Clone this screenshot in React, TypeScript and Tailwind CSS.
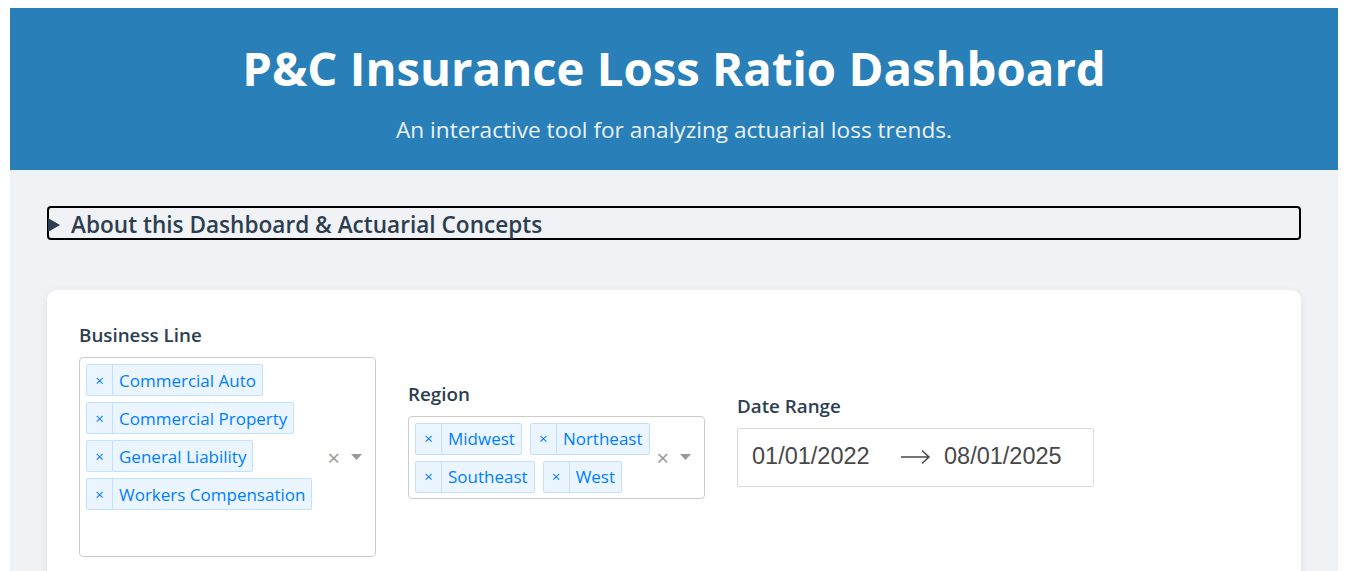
import React from "react";

const font = { fontFamily: '"Open Sans", "Noto Sans", sans-serif' };

function Tag({ label }: { label: string }) {
  return (
    <div className="flex h-[32px] items-stretch rounded-[2px] border border-[#c2e0ff] bg-[#ebf5ff] text-[#007eff]">
      <span className="flex w-[26px] items-center justify-center border-r border-[#c2e0ff] text-[15px] leading-none">×</span>
      <span className="flex items-center px-[6px] text-[17px] leading-none">{label}</span>
    </div>
  );
}

function Caret() {
  return (
    <svg width="11" height="6" viewBox="0 0 11 6" className="block">
      <path d="M0 0 L11 0 L5.5 6 Z" fill="#999" />
    </svg>
  );
}

function Multi({ tags, extra }: { tags: string[]; extra?: boolean }) {
  return (
    <div className="flex w-[297px] rounded-[4px] border border-[#ccc] bg-white">
      <div className="flex flex-1 flex-wrap content-start gap-x-[8px] gap-y-[6px] pb-[5px] pl-[6px] pt-[6px]">
        {tags.map((t) => (
          <Tag key={t} label={t} />
        ))}
        {extra && <div className="h-[35px] w-full" />}
      </div>
      <div className="flex items-center gap-[11px] pr-[13px]">
        <span className="text-[22px] leading-none text-[#999]">×</span>
        <Caret />
      </div>
    </div>
  );
}

export default function App() {
  return (
    <div className="min-h-screen bg-white pl-[10px] pt-[8px]" style={font}>
      <div className="w-[1328px]">
        <header className="flex h-[162px] flex-col items-center bg-[#2980b9] text-white">
          <h1 className="mt-[28px] text-[47.3px] font-bold leading-[64px]">P&amp;C Insurance Loss Ratio Dashboard</h1>
          <p className="mt-[14px] text-[22.6px] leading-[32px] text-[#eaf2f8]">An interactive tool for analyzing actuarial loss trends.</p>
        </header>
        <main className="bg-[#f0f2f5] px-[37px] pb-[40px] pt-[36px]">
          <details className="rounded-[4px] border-2 border-black">
            <summary className="flex h-[30px] cursor-pointer list-none items-center pt-[3px] text-[22.6px] font-semibold text-[#2c3e50]">
              <svg width="12" height="14" viewBox="0 0 12 14" className="ml-[-1px] mr-[11px]">
                <path d="M0 0 L12 7 L0 14 Z" fill="#2c3e50" />
              </svg>
              About this Dashboard &amp; Actuarial Concepts
            </summary>
          </details>
          <section className="mt-[50px] rounded-[10px] bg-white px-[32px] py-[32px] shadow-[0_2px_8px_rgba(0,0,0,0.08)]">
            <div className="flex items-center gap-[32px]">
              <div className="flex flex-col">
                <label className="mb-[8px] text-[18.8px] font-semibold leading-[27px] text-[#2c3e50]">Business Line</label>
                <Multi
                  tags={["Commercial Auto", "Commercial Property", "General Liability", "Workers Compensation"]}
                  extra
                />
              </div>
              <div className="flex flex-col">
                <label className="mb-[8px] text-[18.8px] font-semibold leading-[27px] text-[#2c3e50]">Region</label>
                <Multi tags={["Midwest", "Northeast", "Southeast", "West"]} />
              </div>
              <div className="flex flex-col">
                <label className="mb-[8px] text-[18.8px] font-semibold leading-[27px] text-[#2c3e50]">Date Range</label>
                <div
                  className="flex h-[59px] w-[357px] items-center rounded-[2px] border border-[#dbdbdb] bg-white pl-[14px] text-[23.5px] text-[#484848]"
                  style={{ fontFamily: '"Liberation Sans", Arial, sans-serif' }}
                >
                  <span className="w-[130px]">01/01/2022</span>
                  <svg width="30" height="16" viewBox="0 0 30 16" className="ml-[19px] mr-[13px]">
                    <path d="M0 8 H28 M21 1.5 L28 8 L21 14.5" stroke="#484848" strokeWidth="1.5" fill="none" />
                  </svg>
                  <span>08/01/2025</span>
                </div>
              </div>
            </div>
            <div className="h-[200px]" />
          </section>
        </main>
      </div>
    </div>
  );
}
